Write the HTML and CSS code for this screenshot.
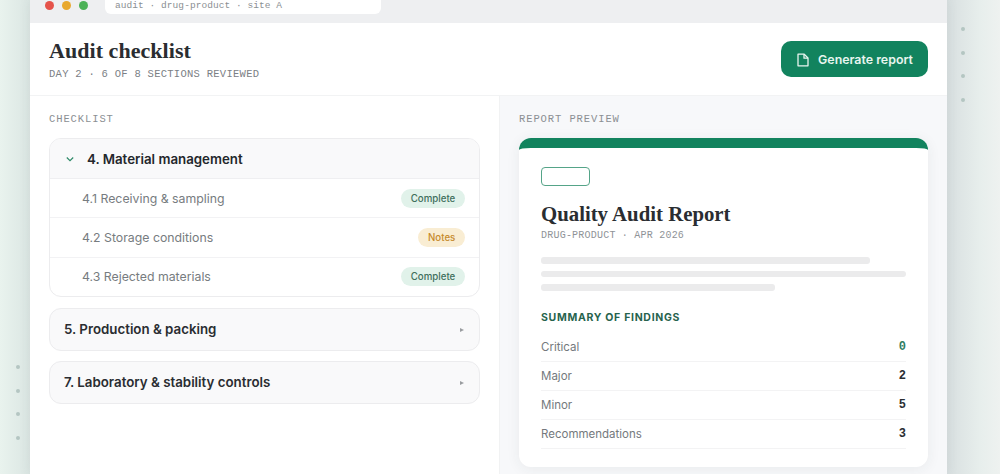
FILE: index.html
```html
<!DOCTYPE html>
<html lang="en">
<head>
<meta charset="utf-8">
<title>Audit checklist</title>
<link rel="stylesheet" href="styles.css">
</head>
<body>
<div class="dots dots-left"><i></i><i></i><i></i><i></i></div>
<div class="dots dots-right"><i></i><i></i><i></i><i></i></div>
<div class="window">
  <div class="titlebar">
    <span class="light red"></span><span class="light amber"></span><span class="light green"></span>
    <div class="address">audit · drug-product · site A</div>
  </div>
  <header class="header">
    <div>
      <h1>Audit checklist</h1>
      <p class="sub">DAY 2 · 6 OF 8 SECTIONS REVIEWED</p>
    </div>
    <button class="generate">
      <svg width="14" height="14" viewBox="0 0 14 14" fill="none" stroke="currentColor" stroke-width="1.3" stroke-linejoin="round"><path d="M2 1.2h6.2L12 5v7.8H2z"/><path d="M8 1.2V5.2h4"/></svg>
      <span>Generate report</span>
    </button>
  </header>
  <div class="panes">
    <section class="left">
      <div class="label">CHECKLIST</div>
      <div class="card open">
        <div class="card-head">
          <svg width="10" height="10" viewBox="0 0 10 10" fill="none" stroke="#2f8a68" stroke-width="1.2"><path d="M1.8 3.5 5 6.6l3.2-3.1"/></svg>
          <span>4. Material management</span>
        </div>
        <div class="row"><span>4.1 Receiving &amp; sampling</span><em class="pill ok">Complete</em></div>
        <div class="row"><span>4.2 Storage conditions</span><em class="pill note">Notes</em></div>
        <div class="row"><span>4.3 Rejected materials</span><em class="pill ok">Complete</em></div>
      </div>
      <div class="card closed"><span>5. Production &amp; packing</span><b class="tri"></b></div>
      <div class="card closed"><span>7. Laboratory &amp; stability controls</span><b class="tri"></b></div>
    </section>
    <section class="right">
      <div class="label">REPORT PREVIEW</div>
      <article class="report">
        <div class="stamp"></div>
        <h2>Quality Audit Report</h2>
        <p class="meta">DRUG-PRODUCT · APR 2026</p>
        <div class="skeleton"><i class="s1"></i><i class="s2"></i><i class="s3"></i></div>
        <h3>SUMMARY OF FINDINGS</h3>
        <div class="finding"><span>Critical</span><b class="zero">0</b></div>
        <div class="finding"><span>Major</span><b>2</b></div>
        <div class="finding"><span>Minor</span><b>5</b></div>
        <div class="finding"><span>Recommendations</span><b>3</b></div>
      </article>
    </section>
  </div>
</div>
</body>
</html>
```
FILE: styles.css
```css
* { box-sizing: border-box; }
html, body { height: 100%; }
body {
  margin: 0;
  height: 474px;
  overflow: hidden;
  position: relative;
  padding-left: 30px;
  font-family: Inter, "Liberation Sans", sans-serif;
  background: linear-gradient(90deg, #e9f3ee 0%, #dbe6e3 3%, #d2dcdb 7%, #d8dfe0 50%, #d8dfe0 94.7%, #e7eeec 98%, #eef2f0 100%);
}
.dots { position: absolute; display: flex; flex-direction: column; gap: 19.5px; }
.dots i { width: 4px; height: 4px; border-radius: 50%; background: #b4c6c2; }
.dots-left { left: 16px; top: 365px; }
.dots-right { left: 961px; top: 27px; }
.window {
  width: 917px;
  height: 474px;
  display: flex;
  flex-direction: column;
  background: #fff;
  box-shadow: 0 0 12px rgba(60, 80, 80, .08);
}
.titlebar {
  height: 23px;
  flex: none;
  display: flex;
  align-items: flex-start;
  background: #eeeff1;
  padding-left: 15px;
}
.light { width: 9px; height: 9px; border-radius: 50%; margin-right: 8px; margin-top: 1px; }
.red { background: #e5534b; }
.amber { background: #e8a82e; }
.green { background: #4cb257; }
.address {
  margin-left: 9px;
  width: 276px;
  height: 14px;
  background: #fff;
  border-radius: 0 0 6px 6px;
  padding: 1px 0 0 10px;
  font: 9.5px/10px "Liberation Mono", monospace;
  letter-spacing: .06px;
  color: #8b8f93;
}
.header {
  height: 73px;
  flex: none;
  display: flex;
  justify-content: space-between;
  align-items: center;
  padding: 0 19px;
  border-bottom: 1px solid #f2f3f4;
}
h1 {
  margin: 0;
  font: 700 22px/26px "Liberation Serif", serif;
  color: #2a2d31;
  letter-spacing: .05px;
}
.sub {
  margin: 3px 0 0;
  font: 10.5px/14px "Liberation Mono", monospace;
  letter-spacing: .27px;
  color: #7b8085;
}
.generate {
  width: 147px;
  height: 36px;
  border: 0;
  border-radius: 10px;
  background: #12835e;
  color: #e8f5ef;
  display: flex;
  align-items: center;
  justify-content: center;
  gap: 8px;
  font: 600 12.4px Inter, sans-serif;
  padding: 1px 0 0;
}
.panes { flex: 1; display: flex; min-height: 0; }
.left { width: 470px; padding: 17px 19px 0; border-right: 1px solid #f1f2f3; }
.right { flex: 1; padding: 17px 19px 0; background: #f7f8fa; }
.label {
  font: 10.5px/12px "Liberation Mono", monospace;
  letter-spacing: .9px;
  color: #8b8f93;
  margin-bottom: 13px;
}
.card { border: 1px solid #ececee; border-radius: 12px; margin-bottom: 10px; }
.open { overflow: hidden; margin-bottom: 11px; }
.card-head {
  height: 40px;
  display: flex;
  align-items: center;
  gap: 12px;
  padding-left: 15px;
  background: #f9f9fa;
  font-size: 13.3px;
  font-weight: 600;
  color: #24272b;
  border-bottom: 1px solid #efeff1;
}
.row {
  height: 39.3px;
  display: flex;
  align-items: center;
  justify-content: space-between;
  padding: 0 14px 0 32px;
  font-size: 12.3px;
  color: #777c80;
  border-bottom: 1px solid #f2f2f4;
}
.row:last-child { border-bottom: 0; height: 38.4px; }
.pill {
  font-style: normal;
  font-size: 9.7px;
  font-weight: 500;
  height: 19px;
  line-height: 19px;
  border-radius: 10px;
  padding: 0 9.7px;
}
.ok { background: #e1f2ea; color: #3f6f5c; }
.note { background: #f9edd3; color: #c68a2d; }
.closed {
  height: 43px;
  display: flex;
  align-items: center;
  justify-content: space-between;
  padding: 0 15px 1px 14px;
  background: #f9f9fa;
  font-size: 13.3px;
  font-weight: 600;
  color: #2a2d31;
}
.tri { width: 0; height: 0; margin-top: 2px; border-left: 4px solid #9a9da0; border-top: 2.5px solid transparent; border-bottom: 2.5px solid transparent; }
.report {
  width: 409px;
  height: 329px;
  background: #fff;
  border-top: 10px solid #12835e;
  border-radius: 12px;
  box-shadow: 0 2px 14px rgba(40, 50, 60, .07);
  padding: 19px 22px 0;
}
.stamp { width: 49px; height: 19px; border: 1.5px solid #55a488; border-radius: 4px; }
h2 {
  margin: 15px 0 0;
  font: 700 20.8px/26px "Liberation Serif", serif;
  color: #2a2d31;
}
.meta {
  margin: 3px 0 0;
  font: 10px/12px "Liberation Mono", monospace;
  letter-spacing: .22px;
  color: #8f9397;
}
.skeleton { display: flex; flex-direction: column; gap: 7px; margin-top: 15px; }
.skeleton i { display: block; height: 6.5px; border-radius: 3px; background: #ebebec; }
.s1 { width: 329px; }
.s2 { width: 365px; }
.s3 { width: 234px; }
h3 {
  margin: 20px 0 9px;
  font: 700 10.5px/14px Inter, sans-serif;
  letter-spacing: .7px;
  color: #27634d;
}
.finding {
  height: 28.8px;
  display: flex;
  align-items: center;
  justify-content: space-between;
  font-size: 11.5px;
  color: #74797d;
  border-bottom: 1px solid #f3f3f4;
}
.finding b { font: 700 12px "Liberation Mono", monospace; color: #2a2d31; }
.finding b.zero { color: #2f7d62; }
```
